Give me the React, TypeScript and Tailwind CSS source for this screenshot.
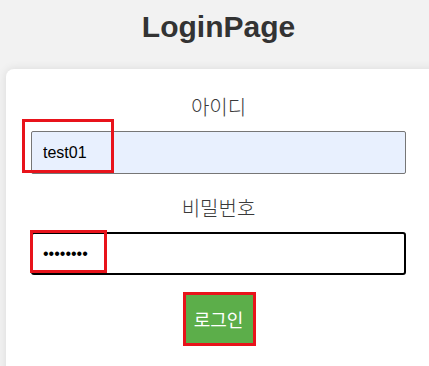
export default function App() {
  return (
    <div className="h-screen w-full overflow-hidden bg-[#f2f2f2] font-['Liberation_Sans','Noto_Sans_CJK_KR',sans-serif] text-[#333]">
      <h1 className="pl-[8px] pt-[10px] text-center text-[30px] font-bold leading-[34px] text-[#333]">LoginPage</h1>

      <div className="relative ml-[6px] mt-[25px] h-[310px] w-[440px] rounded-[8px] bg-white pl-[25px] pr-[35px] pt-[24px] shadow-[0_0_10px_rgba(0,0,0,0.1)]">
        <div className="flex w-[375px] flex-col items-center">
          <label className="text-[20px] font-light leading-[27px] text-[#3a3a3a] font-['Noto_Sans_CJK_KR',sans-serif]">아이디</label>
          <div className="relative mt-[11px] w-full">
            <input
              readOnly
              value="test01"
              className="h-[43px] w-full rounded-[2px] border border-[#767676] bg-[#e8f0fe] px-[11px] text-[16px] text-black outline-none"
            />
            <div className="pointer-events-none absolute left-[-9px] top-[-12px] h-[54px] w-[92px] border-[3px] border-[#e8131b]" />
          </div>

          <label className="mt-[20px] text-[20px] font-light leading-[27px] text-[#3a3a3a] font-['Noto_Sans_CJK_KR',sans-serif]">비밀번호</label>
          <div className="relative mt-[11px] w-full">
            <input
              readOnly
              type="password"
              value="12345678"
              className="h-[43px] w-full rounded-[3px] border-2 border-black bg-white px-[10px] text-[16px] text-black outline-none"
            />
            <div className="pointer-events-none absolute left-[-1px] top-[-2px] h-[43px] w-[77px] border-[3px] border-[#e8131b]" />
          </div>

          <div className="relative mt-[19px]">
            <button className="h-[50px] w-[70px] rounded-[3px] bg-[#5cae4a] text-[18px] text-white font-['Noto_Sans_CJK_KR',sans-serif]">
              로그인
            </button>
            <div className="pointer-events-none absolute left-[-1px] top-[-2px] h-[54px] w-[73px] border-[3px] border-[#e8131b]" />
          </div>
        </div>
      </div>
    </div>
  )
}
